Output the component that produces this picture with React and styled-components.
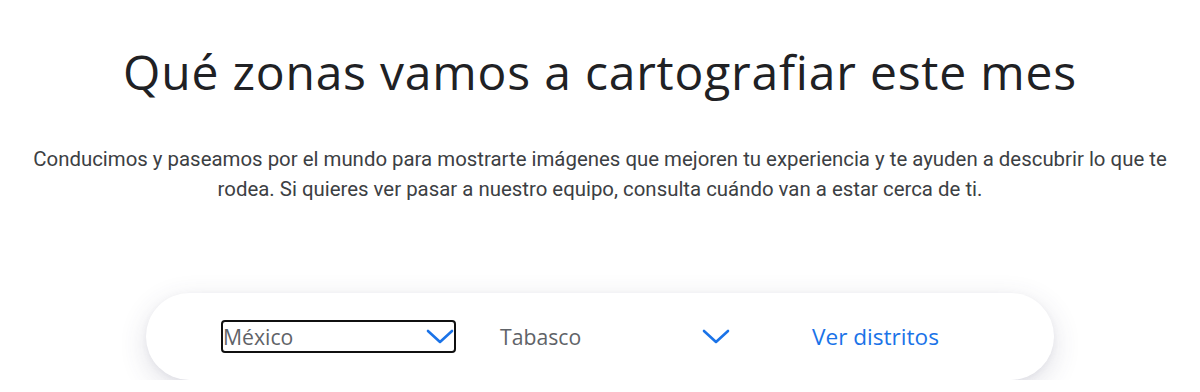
import React from "react";
import styled, { createGlobalStyle } from "styled-components";

const Global = createGlobalStyle`
  html, body { margin: 0; padding: 0; background: #fff; }
  body { font-family: Roboto, "Noto Sans", Arial, sans-serif; }
`;

const Page = styled.main`
  display: flex;
  flex-direction: column;
  align-items: center;
  padding: 40px 10px 0;
`;

const Title = styled.h1`
  margin: 0;
  font-family: "Open Sans", Roboto, sans-serif;
  font-weight: 400;
  font-size: 48px;
  line-height: 64px;
  color: #202124;
  letter-spacing: 0.8px;
  white-space: nowrap;
`;

const Lead = styled.p`
  margin: 40px 0 0;
  max-width: 1145px;
  text-align: center;
  font-family: Roboto, sans-serif;
  font-size: 20.4px;
  line-height: 30px;
  color: #3c4043;
`;

const Card = styled.div`
  margin-top: 89px;
  width: 908px;
  height: 87px;
  box-sizing: border-box;
  border-radius: 44px;
  background: #fff;
  box-shadow: 0 8px 28px rgba(60, 64, 100, 0.16), 0 2px 6px rgba(60, 64, 100, 0.06);
  display: flex;
  align-items: center;
  padding-left: 75px;
`;

const Select = styled.div`
  display: flex;
  align-items: center;
  justify-content: space-between;
  box-sizing: border-box;
  width: ${(p) => p.$w}px;
  height: 33px;
  padding: 0;
  border: 2px solid ${(p) => (p.$focused ? "#101010" : "transparent")};
  border-radius: 4px;
  margin-right: ${(p) => p.$mr}px;
  font-family: "Open Sans", Roboto, sans-serif;
  font-size: 21.2px;
  color: #5f6368;
`;

const Chevron = styled.svg`
  width: 28px;
  height: 16px;
  flex: none;
`;

const Link = styled.a`
  font-family: "Open Sans", Roboto, sans-serif;
  font-size: 22.6px;
  font-weight: 500;
  color: #1a73e8;
  text-decoration: none;
`;

const Down = () => (
  <Chevron viewBox="0 0 28 16">
    <path d="M2 2 L14 13 L26 2" fill="none" stroke="#1a73e8" strokeWidth="2.6" strokeLinecap="round" strokeLinejoin="round" />
  </Chevron>
);

export default function App() {
  return (
    <>
      <Global />
      <Page>
        <Title>Qué zonas vamos a cartografiar este mes</Title>
        <Lead>
          Conducimos y paseamos por el mundo para mostrarte imágenes que mejoren tu experiencia y te ayuden a descubrir lo que te rodea. Si quieres ver pasar a nuestro equipo, consulta cuándo van a estar cerca de ti.
        </Lead>
        <Card>
          <Select $w={235} $mr={42} $focused>
            <span>México</span>
            <Down />
          </Select>
          <Select $w={234} $mr={80}>
            <span>Tabasco</span>
            <Down />
          </Select>
          <Link href="#">Ver distritos</Link>
        </Card>
      </Page>
    </>
  );
}
